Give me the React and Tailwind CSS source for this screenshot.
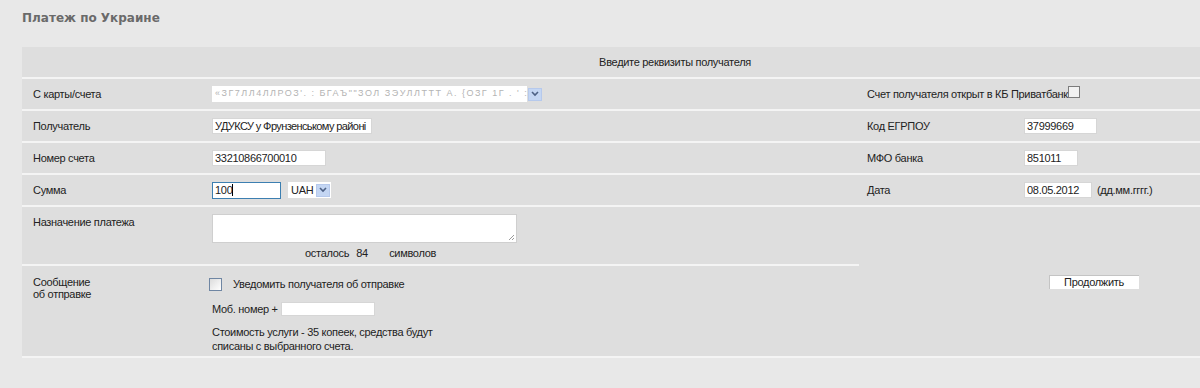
export default function App() {
  const font = { fontFamily: '"Liberation Sans", Arial, sans-serif' };
  return (
    <div className="w-full h-[388px] overflow-hidden bg-[#e8e8e8] text-[11px] tracking-[-0.3px] text-[#222]" style={font}>
      {/* TITLE */}
      <div className="h-[47px] pl-[22px] pt-[9px]">
        <h1 className="text-[12px] font-bold tracking-normal text-[#6a6a6a]" style={{ fontFamily: '"DejaVu Sans", Verdana, sans-serif' }}>
          Платеж по Украине
        </h1>
      </div>

      {/* PANEL */}
      <div className="ml-[22px] w-[1306px] bg-[#dedede] border-b-2 border-[#f4f4f4]">
        {/* HEADER */}
        <div className="h-[32px] flex items-center justify-center border-b-2 border-[#f4f4f4]">
          Введите реквизиты получателя
        </div>

        {/* ROW 1 */}
        <div className="h-[32px] flex items-center border-b-2 border-[#f4f4f4]">
          <div className="w-[837px] flex items-center">
            <span className="w-[190px] pl-[11px]">С карты/счета</span>
            <div className="w-[315px] h-[16px] bg-white flex items-center justify-between pl-[3px] pr-[1px]">
              <span className="text-[#b4b4b4] tracking-[1.5px] whitespace-nowrap text-[9px]">
                «ЗГ7ЛЛ4ЛЛРОЗ'. : БГАЪ""ЗОЛ ЗЭУЛЛТТТ А. {'{'}ОЗГ 1Г . ' :
              </span>
              <SelectArrow />
            </div>
          </div>
          <div className="flex items-center pl-[8px]">
            <span>Счет получателя открыт в КБ Приватбанк</span>
            <span className="w-[12px] h-[12px] -mt-[5px] border border-[#7c7c7c] bg-[#f2f2f2]" />
          </div>
        </div>

        {/* ROW 2 */}
        <div className="h-[32px] flex items-center border-b-2 border-[#f4f4f4]">
          <div className="w-[837px] flex items-center">
            <span className="w-[190px] pl-[11px]">Получатель</span>
            <Field w="w-[160px]" cls="tracking-[-0.6px]" value="УДУКСУ у Фрунзенському районі" />
          </div>
          <div className="flex items-center pl-[8px]">
            <span className="w-[157px]">Код ЕГРПОУ</span>
            <Field w="w-[73px]" value="37999669" />
          </div>
        </div>

        {/* ROW 3 */}
        <div className="h-[32px] flex items-center border-b-2 border-[#f4f4f4]">
          <div className="w-[837px] flex items-center">
            <span className="w-[190px] pl-[11px]">Номер счета</span>
            <Field w="w-[114px]" value="33210866700010" />
          </div>
          <div className="flex items-center pl-[8px]">
            <span className="w-[157px]">МФО банка</span>
            <Field w="w-[54px]" value="851011" />
          </div>
        </div>

        {/* ROW 4 */}
        <div className="h-[32px] flex items-center border-b-2 border-[#f4f4f4]">
          <div className="w-[837px] flex items-center">
            <span className="w-[190px] pl-[11px]">Сумма</span>
            <div className="w-[69px] h-[17px] bg-white border border-[#3c7fb1] flex items-center px-[2px]">
              100<span className="w-px h-[12px] bg-black" />
            </div>
            <div className="ml-[7px] w-[43px] h-[16px] bg-white flex items-center justify-between pl-[3px] pr-[1px]">
              <span>UAH</span>
              <SelectArrow />
            </div>
          </div>
          <div className="flex items-center pl-[8px]">
            <span className="w-[157px]">Дата</span>
            <Field w="w-[68px]" value="08.05.2012" />
            <span className="ml-[5px]">(дд.мм.гггг.)</span>
          </div>
        </div>

        {/* BOTTOM */}
        <div className="flex">
          <div className="w-[837px]">
            <div className="h-[59px] flex border-b-2 border-[#f4f4f4]">
              <span className="w-[190px] pl-[11px] pt-[7px]">Назначение платежа</span>
              <div className="pt-[7px]">
                <div className="relative w-[305px] h-[29px] bg-white border border-[#cfcfcf]">
                  <svg className="absolute right-[1px] bottom-[1px]" width="8" height="8" viewBox="0 0 8 8">
                    <path d="M7 2 L2 7 M7 5 L5 7" stroke="#9a9a9a" strokeWidth="1" />
                  </svg>
                </div>
                <div className="flex pl-[93px] mt-[2px]">
                  <span>осталось</span>
                  <span className="ml-[7px] w-[12px]">84</span>
                  <span className="ml-[21px]">символов</span>
                </div>
              </div>
            </div>
            <div className="h-[90px] flex">
              <span className="w-[190px] pl-[11px] pt-[10px] leading-[12px]">
                Сообщение
                <br />
                об отправке
              </span>
              <div className="pt-[10px] -ml-[3px]">
                <div className="flex items-center">
                  <span className="w-[13px] h-[13px] border border-[#6f86a3] bg-gradient-to-br from-[#dcdcdc] to-white" />
                  <span className="ml-[11px]">Уведомить получателя об отправке</span>
                </div>
                <div className="flex items-center mt-[8px] ml-[3px]">
                  <span>Моб. номер +</span>
                  <Field w="w-[94px]" h="h-[14px]" value="" cls="ml-[3px]" />
                </div>
                <p className="mt-[8px] ml-[3px] leading-[14px]">
                  Стоимость услуги - 35 копеек, средства будут
                  <br />
                  списаны с выбранного счета.
                </p>
              </div>
            </div>
          </div>
          <div className="flex-1 flex items-center justify-center">
            <button className="w-[90px] h-[14px] bg-white border-t border-l border-[#c4c4c4] text-[11px] leading-[12px] text-[#222]">
              Продолжить
            </button>
          </div>
        </div>
      </div>
    </div>
  );
}

function Field({ w, h = "h-[16px]", value, cls = "" }) {
  return (
    <div className={`${w} ${h} ${cls} bg-white border border-[#d6d6d6] flex items-center px-[2px] whitespace-nowrap overflow-hidden`}>
      {value}
    </div>
  );
}

function SelectArrow() {
  return (
    <span className="w-[14px] h-[13px] bg-[#c4d6f3] border border-[#b6c9ec] flex items-center justify-center shrink-0">
      <svg width="8" height="6" viewBox="0 0 8 6">
        <path d="M1 1 L4 4 L7 1" fill="none" stroke="#4d6185" strokeWidth="1.6" />
      </svg>
    </span>
  );
}
